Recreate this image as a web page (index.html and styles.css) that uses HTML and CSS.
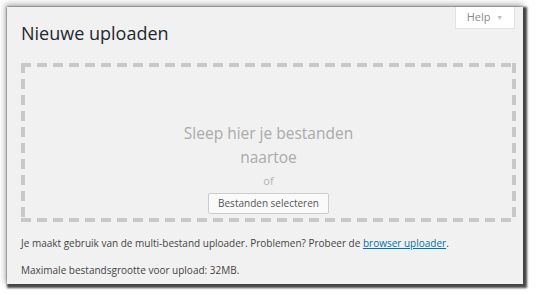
FILE: index.html
```html
<!DOCTYPE html>
<html lang="nl">
<head>
<meta charset="utf-8">
<link rel="stylesheet" href="styles.css">
</head>
<body>
<div class="frame">
  <div class="panel">
    <div class="help-tab">Help <span class="arrow">&#9660;</span></div>
    <h1 class="title">Nieuwe uploaden</h1>
    <div class="dropzone">
      <p class="drop-text">Sleep hier je bestanden<br>naartoe</p>
      <p class="or">of</p>
      <button class="select-btn" type="button">Bestanden selecteren</button>
    </div>
    <p class="info">Je maakt gebruik van de multi-bestand uploader. Problemen? Probeer de <a href="#" class="link">browser uploader</a>.</p>
    <p class="info max">Maximale bestandsgrootte voor upload: 32MB.</p>
  </div>
</div>
</body>
</html>
```
FILE: styles.css
```css
html, body {
  margin: 0;
  padding: 0;
  background: #ffffff;
}
body {
  width: 537px;
  height: 295px;
  overflow: hidden;
  font-family: "Open Sans", "Liberation Sans", sans-serif;
  color: #333;
}
.frame {
  padding: 7px 14px 12px 7px;
}
.panel {
  position: relative;
  box-sizing: border-box;
  width: 516px;
  height: 277px;
  background: #f1f1f1;
  box-shadow: 2px 2px 2px 2px rgba(0,0,0,0.7), -1px -2px 6px 1px rgba(0,0,0,0.3);
  padding: 10px 7px 0 14px;
}
.help-tab {
  position: absolute;
  top: 0;
  right: 8px;
  width: 60px;
  height: 22px;
  box-sizing: border-box;
  background: #fff;
  border: 1px solid #e2e2e2;
  border-top: none;
  font-size: 11px;
  color: #8a8a8a;
  text-align: center;
  line-height: 20px;
}
.help-tab .arrow {
  font-size: 7px;
  color: #c0c0c0;
  vertical-align: 1px;
  margin-left: 3px;
}
.title {
  margin: 0;
  font-size: 18px;
  font-weight: 400;
  color: #23282d;
  line-height: 24px;
  padding-top: 4px;
}
.dropzone {
  margin-top: 18px;
  width: 495px;
  height: 159px;
  box-sizing: border-box;
  background:
    repeating-linear-gradient(90deg, #c8c8c8 0 10px, transparent 10px 16px) left top / 100% 4px no-repeat,
    repeating-linear-gradient(90deg, #c8c8c8 0 10px, transparent 10px 16px) left bottom / 100% 4px no-repeat,
    repeating-linear-gradient(180deg, #c8c8c8 0 10px, transparent 10px 16px) left top / 4px 100% no-repeat,
    repeating-linear-gradient(180deg, #c8c8c8 0 10px, transparent 10px 16px) right top / 4px 100% no-repeat;
  display: flex;
  flex-direction: column;
  align-items: center;
  padding-top: 58px;
}
.drop-text {
  margin: 0;
  font-size: 15.5px;
  line-height: 24px;
  color: #aaaaaa;
  text-align: center;
}
.or {
  margin: 5px 0 0;
  font-size: 11px;
  line-height: 14px;
  color: #b4b4b4;
}
.select-btn {
  margin-top: 5px;
  height: 21px;
  padding: 0 9px;
  background: #fafafa;
  border: 1px solid #cccccc;
  border-radius: 2px;
  font-family: "Open Sans", "Liberation Sans", sans-serif;
  font-size: 10px;
  color: #555;
  line-height: 19px;
}
.info {
  margin: 14px 0 0;
  font-size: 10px;
  line-height: 14px;
  color: #444;
}
.info.max {
  margin-top: 13px;
}
.link {
  color: #0073aa;
  text-decoration: underline;
}
```
